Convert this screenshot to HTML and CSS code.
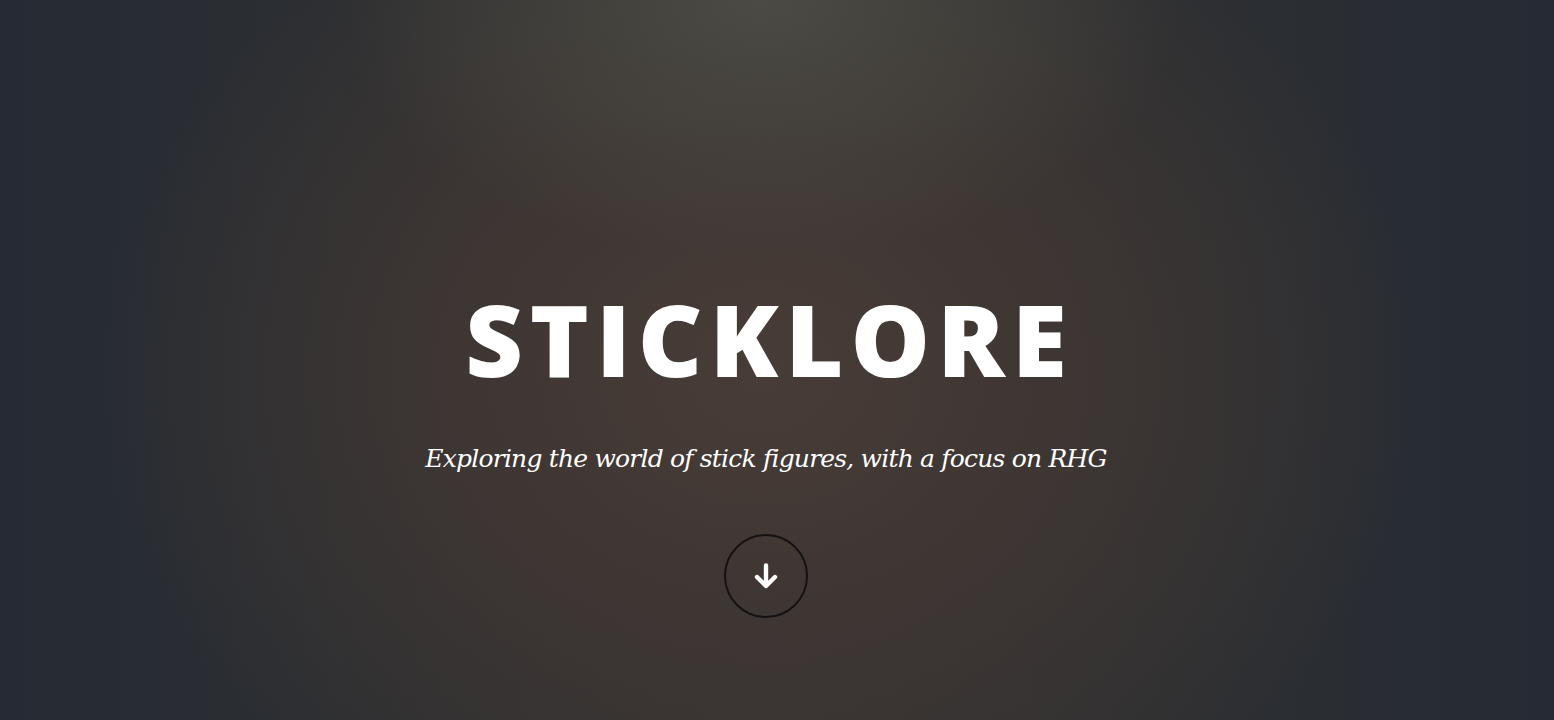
FILE: index.html
```html
<!DOCTYPE html>
<html lang="en">
<head>
<meta charset="utf-8">
<title>Sticklore</title>
<link rel="stylesheet" href="styles.css">
</head>
<body>
<header class="hero">
  <div class="hero-inner">
    <h1 class="title">STICKLORE</h1>
    <p class="subtitle">Exploring the world of stick figures, with a focus on RHG</p>
    <a class="scroll-btn" href="#">
      <svg width="28" height="28" viewBox="0 0 28 28" aria-hidden="true">
        <path d="M14 3.5 V23.5 M5 15 L14 24 L23 15" fill="none" stroke="#fff" stroke-width="4.4" stroke-linecap="round" stroke-linejoin="round"/>
      </svg>
    </a>
  </div>
</header>
</body>
</html>
```
FILE: styles.css
```css
html, body {
  margin: 0;
  padding: 0;
  height: 100%;
}
body {
  background: #272d36;
  font-family: "Open Sans", sans-serif;
  color: #fff;
  overflow: hidden;
}
.hero {
  height: 720px;
  display: flex;
  justify-content: center;
  padding-right: 22px;
  background:
    radial-gradient(ellipse 420px 260px at 49% 0%, rgba(78,78,70,0.85) 0%, rgba(78,78,70,0) 100%),
    radial-gradient(ellipse 660px 540px at 49% 52%, #483c37 0%, #3e3633 45%, rgba(39,45,54,0) 100%),
    linear-gradient(90deg, #252b34 0%, #2f3032 30%, #353333 50%, #2f3032 70%, #252b34 100%);
}
.hero-inner {
  display: flex;
  flex-direction: column;
  align-items: center;
  padding-top: 278px;
}
.title {
  margin: 0;
  font-family: "Open Sans", sans-serif;
  font-weight: 800;
  font-size: 100px;
  line-height: 120px;
  letter-spacing: 7px;
  margin-right: -7px;
  color: #fff;
}
.subtitle {
  margin: 44px 0 0;
  font-family: "DejaVu Serif", serif;
  font-style: italic;
  font-size: 25px;
  line-height: 34px;
  letter-spacing: -0.8px;
  color: #fff;
}
.scroll-btn {
  margin-top: 58px;
  width: 80px;
  height: 80px;
  border: 2px solid #141213;
  border-radius: 50%;
  display: flex;
  align-items: center;
  justify-content: center;
}
```
